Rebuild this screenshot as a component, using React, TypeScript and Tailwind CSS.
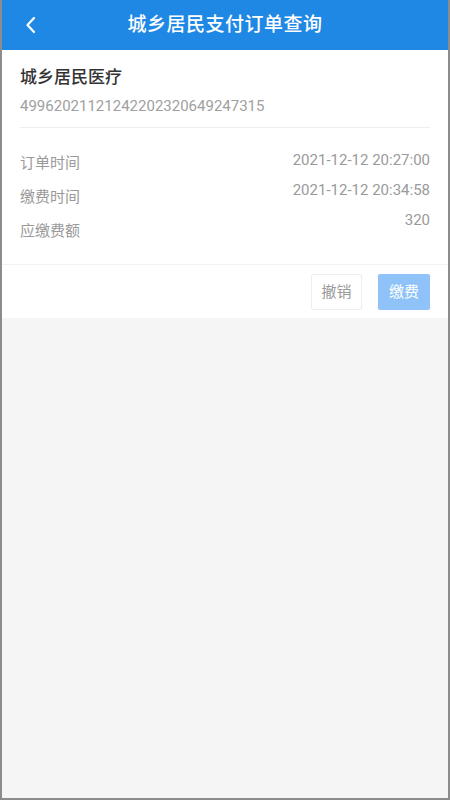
import React from "react";

const rows = [
  { label: "订单时间", value: "2021-12-12 20:27:00" },
  { label: "缴费时间", value: "2021-12-12 20:34:58" },
  { label: "应缴费额", value: "320" },
];

export default function App() {
  return (
    <div className="h-[800px] border-x-2 border-b-2 border-[#8c8c8c] bg-[#f5f5f5] font-['Roboto','Noto_Sans_CJK_SC',sans-serif]">
      <header className="grid h-[50px] grid-cols-[60px_1fr_60px] items-center bg-[#1f88e5] text-white">
        <div className="flex items-center pl-[22px]">
          <svg width="14" height="18" viewBox="0 0 14 18" fill="none">
            <path
              d="M10 2 L3.5 9 L10 16"
              stroke="white"
              strokeWidth="2.2"
              strokeLinecap="round"
              strokeLinejoin="round"
            />
          </svg>
        </div>
        <h1 className="text-center text-[19px] font-medium tracking-[0.5px]">
          城乡居民支付订单查询
        </h1>
        <div />
      </header>

      <div className="bg-white">
        <div className="px-[18px] pt-[15px]">
          <p className="text-[17px] leading-[24px] font-medium text-[#333]">
            城乡居民医疗
          </p>
          <p className="mt-[6px] text-[15px] leading-[22px] text-[#a0a0a0]">
            49962021121242202320649247315
          </p>
          <div className="mt-[10px] h-px bg-[#eeeeee]" />
          <div className="flex justify-between pt-[18px] pb-[16px] text-[15px] text-[#9a9a9a]">
            <div className="flex flex-col">
              {rows.map((r) => (
                <span key={r.label} className="leading-[34px]">
                  {r.label}
                </span>
              ))}
            </div>
            <div className="-mt-[1px] flex flex-col items-end">
              {rows.map((r) => (
                <span key={r.label} className="leading-[30px]">
                  {r.value}
                </span>
              ))}
            </div>
          </div>
        </div>
        <div className="h-px bg-[#f2f2f2]" />
        <div className="flex justify-end gap-[16px] px-[18px] pt-[9px] pb-[8px]">
          <button className="h-[36px] w-[51px] rounded-[2px] border border-[#eeeeee] text-[15px] text-[#9a9a9a]">
            撤销
          </button>
          <button className="h-[36px] w-[52px] rounded-[2px] bg-[#8ec2f8] text-[15px] text-white">
            缴费
          </button>
        </div>
      </div>
    </div>
  );
}
